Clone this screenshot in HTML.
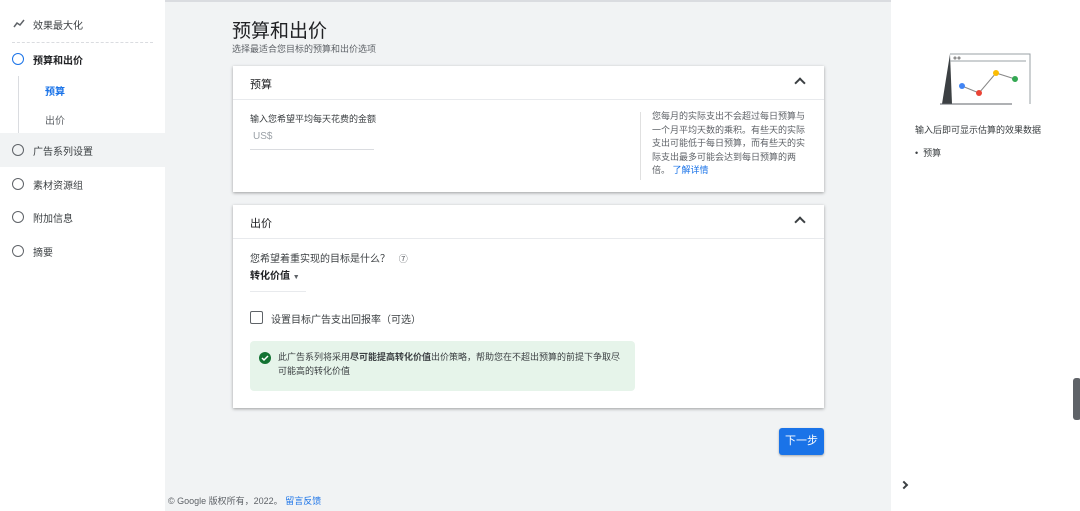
<!DOCTYPE html>
<html><head><meta charset="utf-8"><style>
*{margin:0;padding:0;box-sizing:border-box}
body{width:1080px;height:511px;overflow:hidden;font-family:"Liberation Sans","Noto Sans CJK SC",sans-serif;background:#f1f3f4;position:relative;color:#3c4043}
.abs{position:absolute}
.side{left:0;top:0;width:165px;height:511px;background:#fff}
.right{left:891px;top:0;width:189px;height:511px;background:#fff}
.t{position:absolute;white-space:nowrap}
.circ{position:absolute;width:12px;height:12px;border:1.5px solid #5f6368;border-radius:50%}
.card{position:absolute;left:233px;width:591px;background:#fff;box-shadow:0 1px 3px rgba(0,0,0,.35)}
.hdr{height:34px;border-bottom:1px solid #e8eaed;position:relative}
.chev{position:absolute;right:20px;top:13px;width:8px;height:8px;border-left:2px solid #3c4043;border-top:2px solid #3c4043;transform:rotate(45deg)}
</style></head><body>
<div class="abs" style="left:0;top:0;width:1080px;height:2px;background:#dadce0"></div>
<div class="abs side">
 <svg class="abs" style="left:13px;top:19px" width="12" height="10" viewBox="0 0 12 10"><path d="M1 8l3-4 3 2 4-5" stroke="#5f6368" stroke-width="1.5" fill="none"/></svg>
 <div class="t" style="left:33px;top:17px;font-size:10px">效果最大化</div>
 <div class="abs" style="left:12px;top:42px;width:141px;border-top:1px dashed #dadce0"></div>
 <div class="circ" style="left:12px;top:53px;border-color:#1a73e8"></div>
 <div class="t" style="left:33px;top:52px;font-size:10px;font-weight:bold;color:#202124">预算和出价</div>
 <div class="abs" style="left:18px;top:76px;height:57px;border-left:1px solid #dadce0"></div>
 <div class="t" style="left:45px;top:83px;font-size:10px;color:#1a73e8;font-weight:bold">预算</div>
 <div class="t" style="left:45px;top:112px;font-size:10px;color:#5f6368">出价</div>
 <div class="abs" style="left:0;top:133px;width:165px;height:34px;background:#f1f3f4"></div>
 <div class="circ" style="left:12px;top:144px"></div>
 <div class="t" style="left:33px;top:143px;font-size:10px">广告系列设置</div>
 <div class="circ" style="left:12px;top:178px"></div>
 <div class="t" style="left:33px;top:177px;font-size:10px">素材资源组</div>
 <div class="circ" style="left:12px;top:211px"></div>
 <div class="t" style="left:33px;top:210px;font-size:10px">附加信息</div>
 <div class="circ" style="left:12px;top:245px"></div>
 <div class="t" style="left:33px;top:244px;font-size:10px">摘要</div>
</div>
<div class="t" style="left:232px;top:16px;font-size:19px;color:#202124">预算和出价</div>
<div class="t" style="left:232px;top:42px;font-size:9px;color:#5f6368">选择最适合您目标的预算和出价选项</div>
<div class="card" style="top:66px;height:126px">
 <div class="hdr"><div class="t" style="left:17px;top:10px;font-size:11px;color:#202124">预算</div><div class="chev"></div></div>
 <div class="t" style="left:17px;top:46px;font-size:9px">输入您希望平均每天花费的金额</div>
 <div class="t" style="left:20px;top:65px;font-size:10px;color:#9aa0a6">US$</div>
 <div class="abs" style="left:17px;top:83px;width:124px;border-top:1px solid #dadce0"></div>
 <div class="abs" style="left:407px;top:46px;height:68px;border-left:1px solid #e0e0e0"></div>
 <div class="abs" style="left:419px;top:44px;width:155px;font-size:9px;line-height:13.6px;color:#5f6368">您每月的实际支出不会超过每日预算与一个月平均天数的乘积。有些天的实际支出可能低于每日预算，而有些天的实际支出最多可能会达到每日预算的两倍。 <span style="color:#1a73e8">了解详情</span></div>
</div>
<div class="card" style="top:205px;height:203px">
 <div class="hdr"><div class="t" style="left:17px;top:10px;font-size:11px;color:#202124">出价</div><div class="chev"></div></div>
 <div class="t" style="left:17px;top:45px;font-size:10px">您希望着重实现的目标是什么？ <span style="margin-left:6px;font-size:9px;color:#5f6368">⑦</span></div>
 <div class="t" style="left:17px;top:62px;font-size:10px;color:#202124;font-weight:bold">转化价值 <span style="font-size:7px;color:#5f6368;font-weight:normal">▼</span></div>
 <div class="abs" style="left:17px;top:86px;width:56px;border-top:1px solid #e8eaed"></div>
 <div class="abs" style="left:17px;top:106px;width:13px;height:13px;border:1.5px solid #5f6368;border-radius:2px"></div>
 <div class="t" style="left:38px;top:106px;font-size:10px">设置目标广告支出回报率（可选）</div>
 <div class="abs" style="left:17px;top:136px;width:385px;height:50px;background:#e6f4ea;border-radius:4px"></div>
 <svg class="abs" style="left:26px;top:147px" width="12" height="12" viewBox="0 0 12 12"><circle cx="6" cy="6" r="6" fill="#137333"/><path d="M3 6l2 2 4-4" stroke="#fff" stroke-width="1.5" fill="none"/></svg>
 <div class="abs" style="left:45px;top:145px;width:350px;font-size:9px;line-height:14px;color:#3c4043">此广告系列将采用<b>尽可能提高转化价值</b>出价策略，帮助您在不超出预算的前提下争取尽可能高的转化价值</div>
</div>
<div class="abs" style="left:779px;top:428px;width:45px;height:27px;background:#1a73e8;border-radius:3px;box-shadow:0 1px 2px rgba(0,0,0,.3);color:#fff;font-size:11px;text-align:center;line-height:27px">下一步</div>
<div class="t" style="left:168px;top:494px;font-size:9px;color:#5f6368">© Google 版权所有，2022。 <span style="color:#1a73e8">留言反馈</span></div>
<div class="abs right">
 <svg class="abs" style="left:49px;top:53px" width="92" height="52" viewBox="0 0 92 52">
  <path d="M10 1h80v50" stroke="#9aa0a6" fill="none"/><path d="M10 1L2 51h10z" fill="#3c4043"/><path d="M10 8h76" stroke="#9aa0a6"/>
  <circle cx="15" cy="5" r="1" fill="none" stroke="#777"/><circle cx="19" cy="5" r="1" fill="none" stroke="#777"/>
  <path d="M0 51h72" stroke="#5f6368"/>
  <path d="M22 33l17 7 17-20 19 6" stroke="#888" fill="none"/>
  <circle cx="22" cy="33" r="3" fill="#4285f4"/><circle cx="39" cy="40" r="3" fill="#ea4335"/><circle cx="56" cy="20" r="3" fill="#fbbc04"/><circle cx="75" cy="26" r="3" fill="#34a853"/>
 </svg>
 <div class="t" style="left:24px;top:123px;font-size:9px">输入后即可显示估算的效果数据</div>
 <div class="t" style="left:24px;top:146px;font-size:9px">•&nbsp; 预算</div>
 <div class="abs" style="left:10px;top:482px;width:6px;height:6px;border-right:2px solid #3c4043;border-top:2px solid #3c4043;transform:rotate(45deg)"></div>
 <div class="abs" style="left:182px;top:378px;width:8px;height:42px;background:#5f6368;border-radius:3px"></div>
</div>
</body></html>
